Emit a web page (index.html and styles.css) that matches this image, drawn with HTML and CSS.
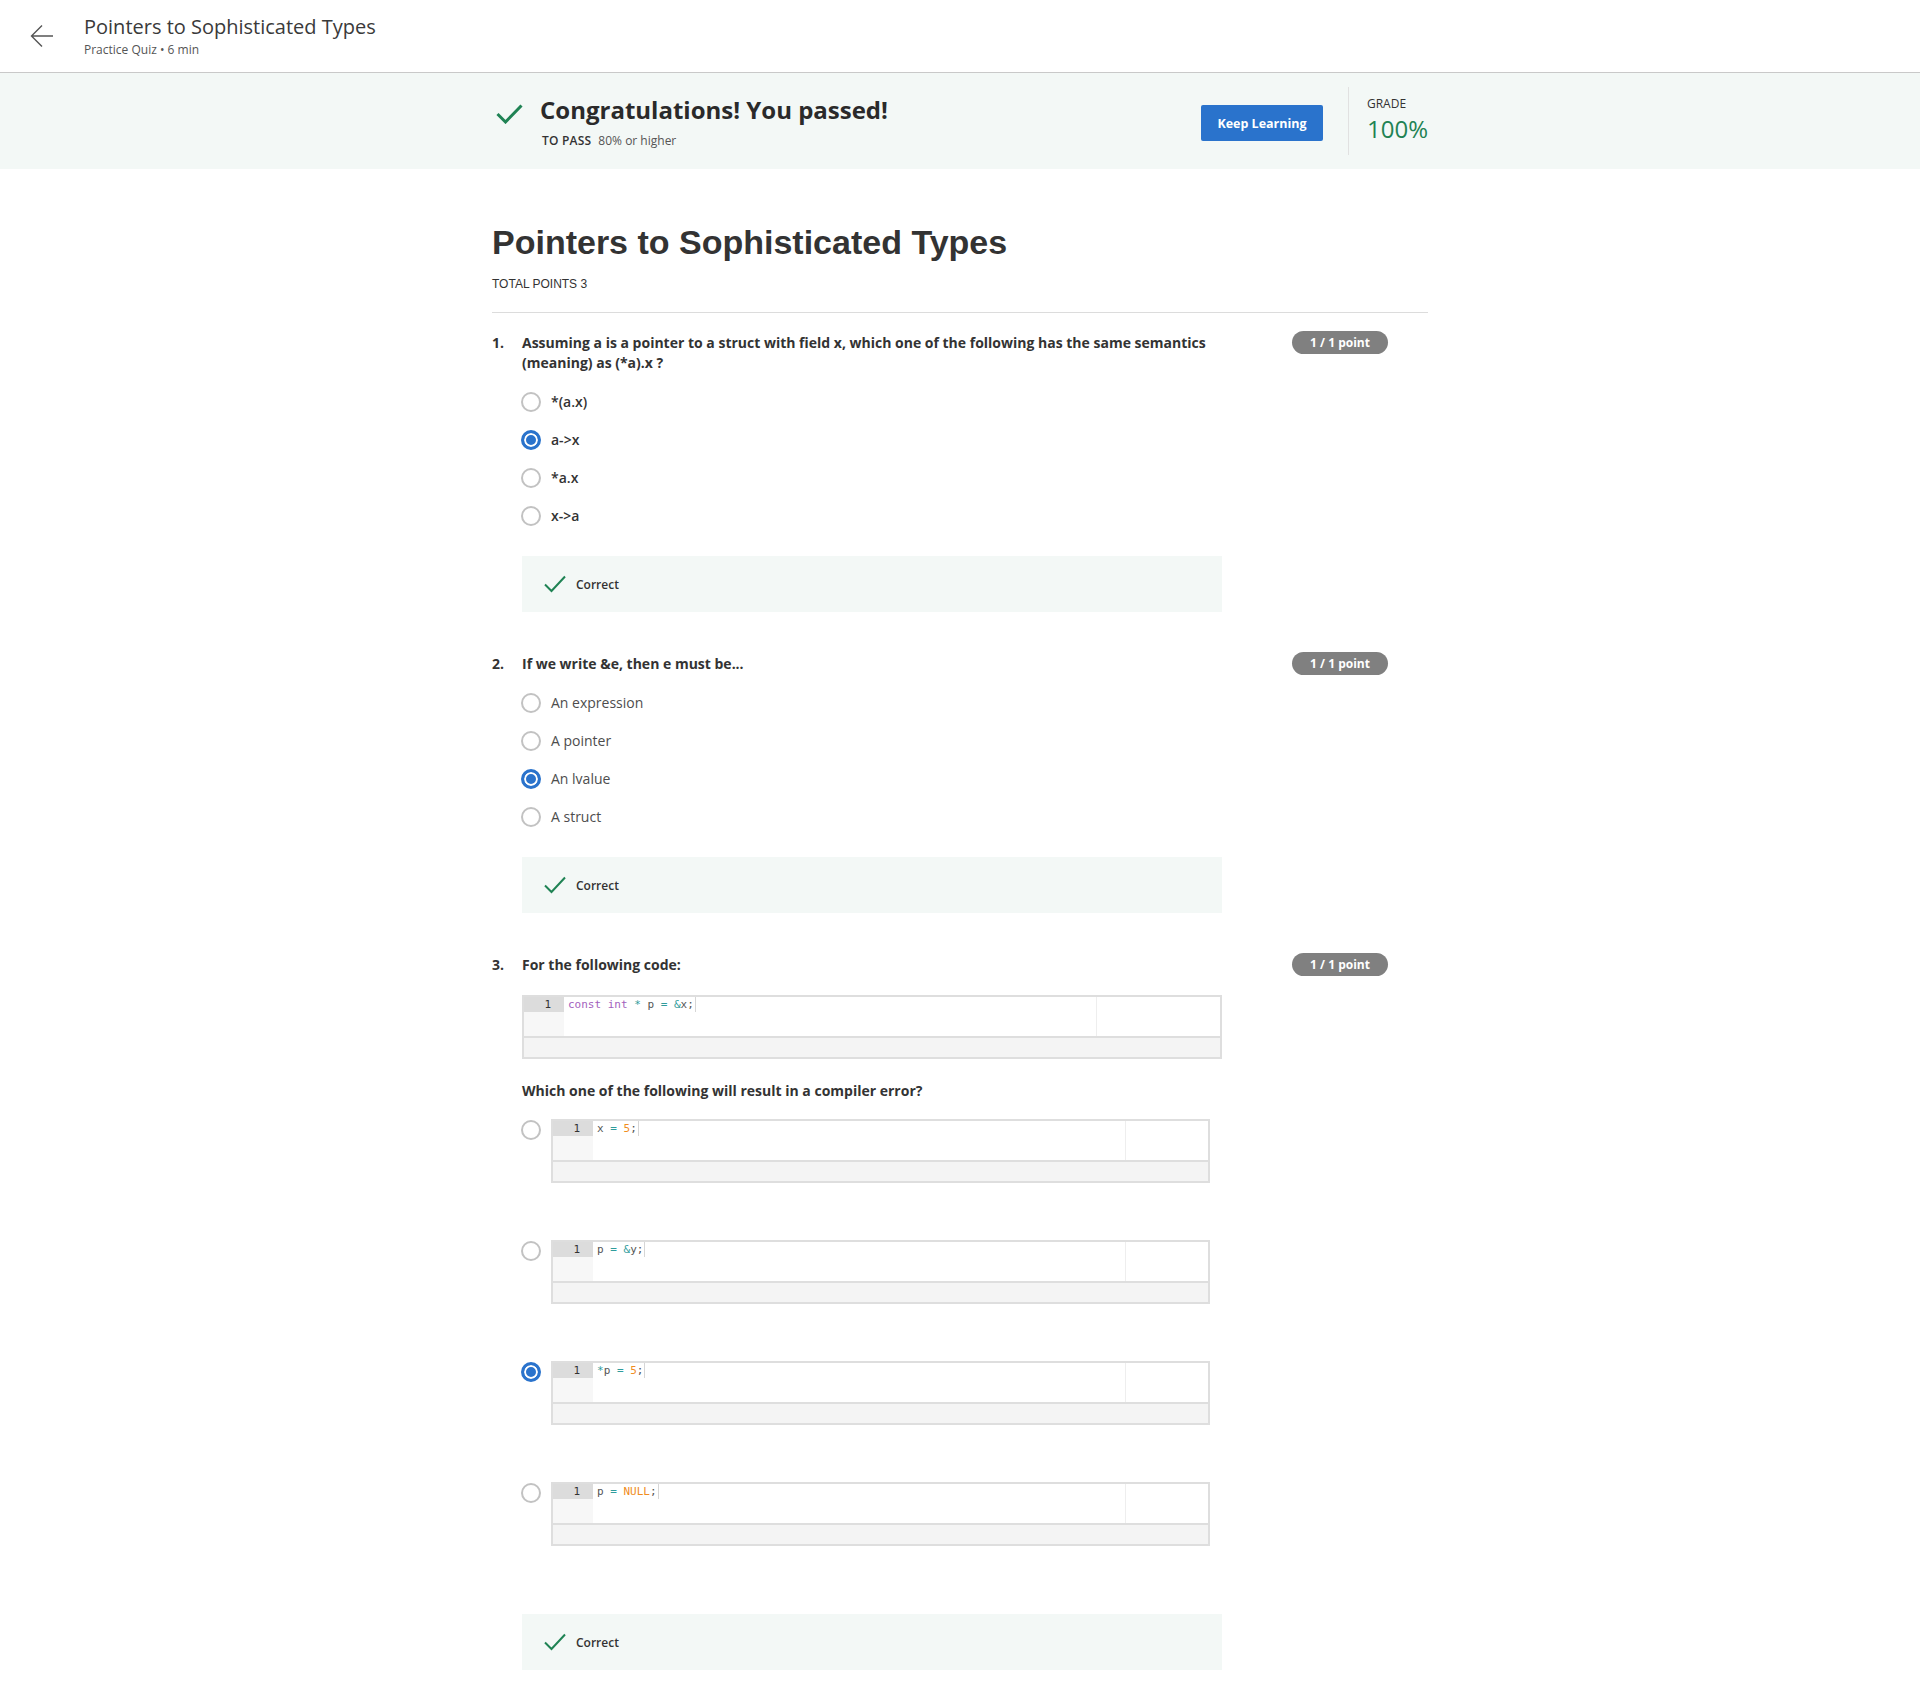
FILE: index.html
```html
<!DOCTYPE html>
<html lang="en">
<head>
<meta charset="utf-8">
<title>Pointers to Sophisticated Types</title>
<link rel="stylesheet" href="styles.css">
</head>
<body>
<header class="topbar">
  <a class="back" href="#" aria-label="Back">
    <svg width="24" height="24" viewBox="0 0 24 24"><path d="M23 12H1.5M12 1.5L1.5 12L12 22.5" fill="none" stroke="#555" stroke-width="1.4"/></svg>
  </a>
  <div class="titles">
    <div class="page-title">Pointers to Sophisticated Types</div>
    <div class="page-sub">Practice Quiz • 6 min</div>
  </div>
</header>

<section class="banner">
  <div class="banner-inner">
    <div class="pass">
      <svg class="check-lg" width="27" height="20" viewBox="0 0 27 20"><path d="M1.5 10L9.5 18L25.5 1.5" fill="none" stroke="#1f8354" stroke-width="3"/></svg>
      <div class="pass-text">
        <div class="pass-title">Congratulations! You passed!</div>
        <div class="pass-req"><span class="req-label">TO PASS</span> 80% or higher</div>
      </div>
    </div>
    <button class="keep">Keep Learning</button>
    <div class="vdiv"></div>
    <div class="grade">
      <div class="grade-label">GRADE</div>
      <div class="grade-val">100%</div>
    </div>
  </div>
</section>

<main class="content">
  <h1 class="quiz-title">Pointers to Sophisticated Types</h1>
  <div class="total">TOTAL POINTS 3</div>
  <hr class="rule">

  <div class="question">
    <div class="qnum">1.</div>
    <div class="qbody">
      <div class="qtext">Assuming a is a pointer to a struct with field x, which one of the following has the same semantics (meaning) as (*a).x ?</div>
      <div class="options strong">
        <div class="option"><span class="radio"></span><span class="opt-label">*(a.x)</span></div>
        <div class="option"><span class="radio checked"></span><span class="opt-label">a-&gt;x</span></div>
        <div class="option"><span class="radio"></span><span class="opt-label">*a.x</span></div>
        <div class="option"><span class="radio"></span><span class="opt-label">x-&gt;a</span></div>
      </div>
      <div class="correct">
        <svg width="22" height="18" viewBox="0 0 22 18"><path d="M1 9.5L7.5 16L21 1.5" fill="none" stroke="#1f8354" stroke-width="2"/></svg>
        <span>Correct</span>
      </div>
    </div>
    <div class="qside"><span class="badge">1 / 1 point</span></div>
  </div>

  <div class="question">
    <div class="qnum">2.</div>
    <div class="qbody">
      <div class="qtext">If we write &amp;e, then e must be...</div>
      <div class="options">
        <div class="option"><span class="radio"></span><span class="opt-label">An expression</span></div>
        <div class="option"><span class="radio"></span><span class="opt-label">A pointer</span></div>
        <div class="option"><span class="radio checked"></span><span class="opt-label">An lvalue</span></div>
        <div class="option"><span class="radio"></span><span class="opt-label">A struct</span></div>
      </div>
      <div class="correct">
        <svg width="22" height="18" viewBox="0 0 22 18"><path d="M1 9.5L7.5 16L21 1.5" fill="none" stroke="#1f8354" stroke-width="2"/></svg>
        <span>Correct</span>
      </div>
    </div>
    <div class="qside"><span class="badge">1 / 1 point</span></div>
  </div>

  <div class="question">
    <div class="qnum">3.</div>
    <div class="qbody">
      <div class="qtext">For the following code:</div>
      <div class="code code-prompt">
        <div class="code-editor">
          <div class="gutter"><div class="lnum">1</div></div>
          <div class="code-line"><span class="kw">const int</span> <span class="op">*</span> p <span class="op">=</span> <span class="op">&amp;</span>x;<span class="cursor"></span></div>
          <span class="ruler"></span>
        </div>
        <div class="code-foot"></div>
      </div>
      <div class="qtext q-sub">Which one of the following will result in a compiler error?</div>
      <div class="code-options">
        <div class="code-option">
          <span class="radio"></span>
          <div class="code">
            <div class="code-editor">
              <div class="gutter"><div class="lnum">1</div></div>
              <div class="code-line">x <span class="op">=</span> <span class="num">5</span>;<span class="cursor"></span></div>
              <span class="ruler"></span>
            </div>
            <div class="code-foot"></div>
          </div>
        </div>
        <div class="code-option">
          <span class="radio"></span>
          <div class="code">
            <div class="code-editor">
              <div class="gutter"><div class="lnum">1</div></div>
              <div class="code-line">p <span class="op">=</span> <span class="op">&amp;</span>y;<span class="cursor"></span></div>
              <span class="ruler"></span>
            </div>
            <div class="code-foot"></div>
          </div>
        </div>
        <div class="code-option">
          <span class="radio checked"></span>
          <div class="code">
            <div class="code-editor">
              <div class="gutter"><div class="lnum">1</div></div>
              <div class="code-line"><span class="op">*</span>p <span class="op">=</span> <span class="num">5</span>;<span class="cursor"></span></div>
              <span class="ruler"></span>
            </div>
            <div class="code-foot"></div>
          </div>
        </div>
        <div class="code-option">
          <span class="radio"></span>
          <div class="code">
            <div class="code-editor">
              <div class="gutter"><div class="lnum">1</div></div>
              <div class="code-line">p <span class="op">=</span> <span class="num">NULL</span>;<span class="cursor"></span></div>
              <span class="ruler"></span>
            </div>
            <div class="code-foot"></div>
          </div>
        </div>
      </div>
      <div class="correct correct-last">
        <svg width="22" height="18" viewBox="0 0 22 18"><path d="M1 9.5L7.5 16L21 1.5" fill="none" stroke="#1f8354" stroke-width="2"/></svg>
        <span>Correct</span>
      </div>
    </div>
    <div class="qside"><span class="badge">1 / 1 point</span></div>
  </div>
</main>
</body>
</html>
```

FILE: styles.css
```css
* { box-sizing: border-box; }

html, body {
  margin: 0;
  padding: 0;
  background: #fff;
}

body {
  font-family: "Open Sans", "Liberation Sans", Arial, sans-serif;
  color: #1f1f1f;
}

/* ---------- top bar ---------- */
.topbar {
  height: 73px;
  border-bottom: 1px solid #c9c9c9;
  display: flex;
  align-items: flex-start;
}

.back {
  display: block;
  width: 24px;
  height: 24px;
  margin: 24px 0 0 30px;
}
.back svg { display: block; }

.titles {
  margin-left: 30px;
  padding-top: 15px;
}

.page-title {
  font-size: 20px;
  line-height: 24px;
  color: #3a3a3a;
}

.page-sub {
  margin-top: 3px;
  font-size: 12px;
  line-height: 16px;
  color: #555;
}

/* ---------- banner ---------- */
.banner {
  height: 96px;
  background: #f3f8f6;
}

.banner-inner {
  width: 936px;
  height: 96px;
  margin: 0 auto;
  display: flex;
  align-items: center;
}

.pass {
  display: flex;
  align-items: flex-start;
  padding-left: 4px;
}

.check-lg {
  display: block;
  margin-top: 10px;
}

.pass-text { margin-left: 17px; }

.pass-title {
  font-size: 24px;
  line-height: 32px;
  font-weight: 700;
  color: #2a2a2a;
}

.pass-req {
  margin-top: 7px;
  padding-left: 2px;
  font-size: 12px;
  line-height: 16px;
  color: #555;
}

.req-label {
  font-weight: 600;
  color: #333;
  letter-spacing: 0.2px;
  margin-right: 4px;
}

.keep {
  margin-left: auto;
  margin-top: 4px;
  width: 122px;
  height: 36px;
  border: 0;
  border-radius: 2px;
  background: #2a73cc;
  color: #fff;
  font-family: "Open Sans", "Liberation Sans", Arial, sans-serif;
  font-size: 12.5px;
  font-weight: 700;
  padding: 0;
}

.vdiv {
  width: 1px;
  height: 68px;
  background: #e1e1e1;
  margin-left: 25px;
  margin-right: 18px;
}

.grade { margin-top: -5px; }

.grade-label {
  font-size: 12px;
  line-height: 16px;
  color: #333;
}

.grade-val {
  margin-top: 5px;
  font-size: 24px;
  line-height: 24px;
  color: #1f8354;
}

/* ---------- main ---------- */
.content {
  width: 936px;
  margin: 0 auto;
  padding-top: 53px;
  padding-bottom: 11px;
}

.quiz-title {
  margin: 0;
  font-family: "Liberation Sans", Arial, sans-serif;
  font-size: 34px;
  line-height: 40px;
  font-weight: 700;
  color: #333;
}

.total {
  margin-top: 14px;
  font-family: "Liberation Sans", Arial, sans-serif;
  font-size: 12px;
  line-height: 16px;
  color: #333;
}

.rule {
  margin: 20px 0 0;
  border: 0;
  border-top: 1px solid #dcdcdc;
  height: 0;
}

.question {
  display: flex;
  margin-top: 20px;
}
.question + .question { margin-top: 42px; }

.qnum {
  width: 30px;
  font-size: 14px;
  line-height: 20px;
  font-weight: 700;
  color: #333;
}

.qbody { width: 700px; }

.qtext {
  font-size: 14px;
  line-height: 20px;
  font-weight: 700;
  color: #333;
}

.qside {
  flex: 1;
  padding-left: 70px;
}

.badge {
  display: block;
  width: 96px;
  height: 23px;
  margin-top: -2px;
  border-radius: 12px;
  background: #808080;
  color: #fff;
  font-size: 12px;
  line-height: 23px;
  font-weight: 700;
  text-align: center;
}

.options { margin-top: 10px; }

.option {
  display: flex;
  align-items: center;
  height: 38px;
}

.radio {
  flex: none;
  display: block;
  width: 20px;
  height: 20px;
  margin-left: -1px;
  border: 2px solid #c2c2c2;
  border-radius: 50%;
  background: #fff;
}

.radio.checked {
  border: 3px solid #2a73cc;
  background: #2a73cc;
  box-shadow: inset 0 0 0 2px #fff;
}

.opt-label {
  margin-left: 10px;
  font-size: 14px;
  line-height: 20px;
  color: #4d4d4d;
}

.options.strong .opt-label {
  font-weight: 600;
  color: #333;
}

.correct {
  margin-top: 21px;
  height: 56px;
  background: #f3f8f6;
  display: flex;
  align-items: center;
  padding-left: 22px;
}
.correct svg { display: block; }
.correct span {
  margin-left: 10px;
  font-size: 12px;
  font-weight: 600;
  color: #333;
}
.correct-last { margin-top: 68px; }

/* ---------- code blocks ---------- */
.code {
  border: 2px solid #dedede;
  background: #fff;
}

.code-prompt { margin-top: 20px; }

.code-editor {
  position: relative;
  height: 41px;
  display: flex;
  border-bottom: 2px solid #dedede;
}

.gutter {
  width: 40px;
  flex: none;
  background: #f7f7f7;
}

.lnum {
  height: 15px;
  line-height: 15px;
  padding-right: 13px;
  text-align: right;
  background: #dcdcdc;
  font-family: "DejaVu Sans Mono", "Liberation Mono", monospace;
  font-size: 11px;
  color: #333;
}

.code-line {
  padding-left: 4px;
  height: 15px;
  line-height: 15px;
  font-family: "DejaVu Sans Mono", "Liberation Mono", monospace;
  font-size: 11px;
  color: #555;
  white-space: pre;
}

.cursor {
  display: inline-block;
  width: 1px;
  height: 15px;
  vertical-align: top;
  background: #d6d6d6;
  margin-left: 1px;
}

.kw { color: #a25fbd; }
.op { color: #2f9c9c; }
.num { color: #f08d1e; }

.ruler {
  position: absolute;
  top: 0;
  bottom: 0;
  left: 572px;
  width: 1px;
  background: #eeeeee;
}

.code-foot {
  height: 19px;
  background: #f4f4f4;
}

.q-sub { margin-top: 22px; }

.code-options { margin-top: 18px; }

.code-option {
  display: flex;
  align-items: flex-start;
}
.code-option + .code-option { margin-top: 57px; }

.code-option .radio { margin-top: 1px; }

.code-option .code {
  margin-left: 10px;
  width: 659px;
}
```
